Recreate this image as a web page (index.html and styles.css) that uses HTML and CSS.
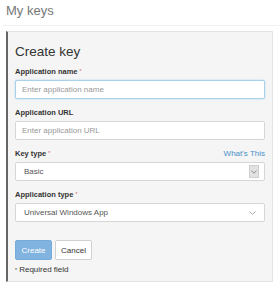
FILE: index.html
```html
<!DOCTYPE html>
<html lang="en">
<head>
  <meta charset="UTF-8">
  <title>My keys</title>
  <link rel="stylesheet" href="styles.css">
</head>
<body>
  <h1 class="page-title">My keys</h1>

  <div class="panel">
    <h2>Create key</h2>

    <div class="field">
      <label>Application name <span class="req">*</span></label>
      <input type="text" class="input focused" placeholder="Enter application name">
    </div>

    <div class="field">
      <label>Application URL</label>
      <input type="text" class="input" placeholder="Enter application URL">
    </div>

    <div class="field">
      <div class="label-row">
        <label>Key type <span class="req">*</span></label>
        <a href="#" class="help">What's This</a>
      </div>
      <div class="select boxed">
        <span>Basic</span>
        <span class="arrow-box">
          <svg width="6" height="4" viewBox="0 0 6 4"><path d="M0.5 0.5 L3 3.3 L5.5 0.5" fill="none" stroke="#888" stroke-width="0.9"/></svg>
        </span>
      </div>
    </div>

    <div class="field">
      <label>Application type <span class="req">*</span></label>
      <div class="select">
        <span>Universal Windows App</span>
        <svg width="7" height="4" viewBox="0 0 7 4"><path d="M0.5 0.5 L3.5 3.4 L6.5 0.5" fill="none" stroke="#999" stroke-width="0.9"/></svg>
      </div>
    </div>

    <div class="actions">
      <button class="btn primary">Create</button>
      <button class="btn">Cancel</button>
    </div>

    <p class="note"><span class="req">*</span> Required field</p>
  </div>
</body>
</html>
```

FILE: styles.css
```css
body {
  margin: 0;
  padding: 3px 7px 0 6px;
  font-family: "Liberation Sans", Arial, sans-serif;
  background: #fff;
  color: #333;
}

.page-title {
  margin: 0 -7px 0 -3px;
  padding: 0 0 7px 3px;
  font-size: 13px;
  font-weight: normal;
  line-height: 15px;
  color: #777;
  border-bottom: 1px solid #f2f2f2;
}

.panel {
  margin-top: 5px;
  background: #f5f5f5;
  border: 1px solid #e4e4e4;
  border-left: 2px solid #666;
  padding: 12px 7px 6px 7px;
}

.panel h2 {
  margin: 0 0 7px;
  font-size: 13.5px;
  font-weight: normal;
  line-height: 16px;
  color: #333;
}

.field {
  margin-bottom: 9px;
}

.field label {
  display: block;
  margin-bottom: 4px;
  font-size: 7.5px;
  font-weight: bold;
  line-height: 9px;
  color: #333;
}

.req {
  color: #d9534f;
  font-weight: normal;
  font-size: 5px;
  vertical-align: top;
}

.label-row {
  display: flex;
  justify-content: space-between;
  align-items: baseline;
}

.help {
  font-size: 8px;
  line-height: 9px;
  color: #4a8fc8;
  text-decoration: none;
}

.input, .select {
  display: flex;
  align-items: center;
  justify-content: space-between;
  box-sizing: border-box;
  width: 100%;
  height: 19px;
  padding: 0 8px;
  background: #fff;
  border: 1px solid #d6d6d6;
  border-radius: 2px;
  font-family: inherit;
  font-size: 8px;
  color: #555;
}

.input {
  padding-left: 6px;
}

.input::placeholder {
  color: #999;
}

.input.focused {
  border-color: #a9d0ec;
  box-shadow: 0 0 2px rgba(102,175,233,0.45);
  outline: none;
}

.select.boxed {
  padding-right: 5px;
}

.arrow-box {
  display: flex;
  align-items: center;
  justify-content: center;
  box-sizing: border-box;
  width: 10px;
  height: 13px;
  background: #e2e2e2;
  border: 1px solid #cfcfcf;
}

.actions {
  display: flex;
  gap: 3px;
  margin-top: 18px;
}

.btn {
  width: 37px;
  height: 20px;
  padding: 0;
  font-family: inherit;
  font-size: 8px;
  background: #fff;
  color: #333;
  border: 1px solid #d0d0d0;
  border-radius: 2px;
}

.btn.primary {
  background: #80b3df;
  border-color: #78abd8;
  color: #fff;
}

.note {
  margin: 5px 0 0;
  font-size: 8px;
  line-height: 10px;
  color: #333;
}

.note .req {
  color: #333;
}
```
